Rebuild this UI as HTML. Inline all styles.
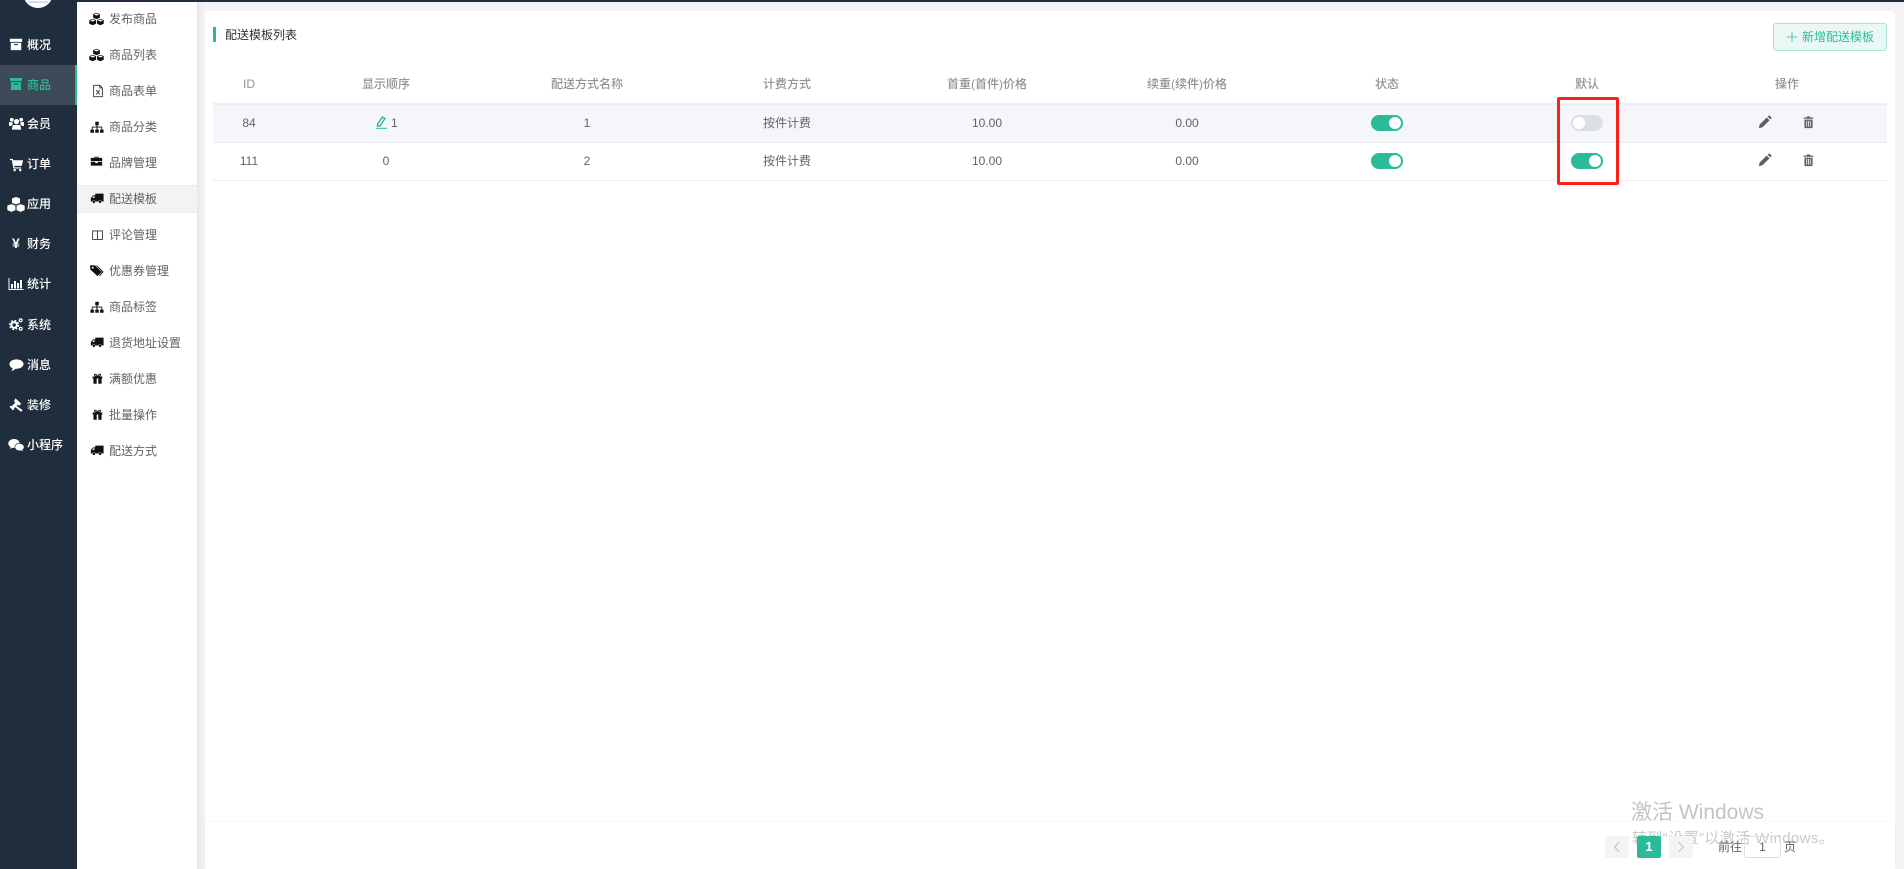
<!DOCTYPE html>
<html lang="zh"><head><meta charset="utf-8"><title>配送模板列表</title>
<style>
*{box-sizing:border-box}
html,body{margin:0;padding:0}
body{width:1904px;height:869px;position:relative;overflow:hidden;background:#f3f3f3;font:12px/16px "Liberation Sans","Noto Sans CJK SC",sans-serif;color:#606266}
.a{position:absolute}
.t{position:absolute;white-space:nowrap}
.c{position:absolute;white-space:nowrap;transform:translateX(-50%);text-align:center}
svg{position:absolute;display:block}
.m{position:absolute;left:27px;color:#fff;font-weight:500;white-space:nowrap;line-height:16px}
.s{position:absolute;left:109px;color:#606266;white-space:nowrap;line-height:16px}
.h{color:#909399;font-weight:500}
.sw{position:absolute;width:32px;height:16px;border-radius:8px;background:#2bbb9b}
.sw i{position:absolute;top:2px;left:18px;width:12px;height:12px;border-radius:50%;background:#fff}
.sw.off{background:#dcdfe6}.sw.off i{left:2px}
.pg{position:absolute;top:836px;width:24px;height:22px;border-radius:2px;background:#f4f4f5}
</style></head><body>
<svg width="0" height="0" style="position:absolute">
<defs>
<symbol id="cubes" viewBox="0 0 16 16"><path d="M8 .8l3.600 1.400v3.900L8 7.600 4.400 6.100V2.200zM3.900 7.200l3.600 1.400v3.900l-3.600 1.600L.3 12.500V8.600zM12.100 7.200l3.600 1.400v3.900l-3.600 1.600-3.600-1.600V8.600z" fill="currentColor"/><path d="M5.200 2.600L8 3.700l2.800-1.100L8 1.600zM1.100 9L3.900 10.100 6.700 9 3.900 8zM9.300 9l2.800 1.100L14.900 9 12.100 8z" fill="#fff"/></symbol>
<symbol id="file" viewBox="0 0 16 16"><path d="M3 1.500h7l3 3v10H3zM10 1.500v3h3" fill="none" stroke="currentColor" stroke-width="1"/><path d="M6 7l4 5M10 7l-4 5" stroke="currentColor" stroke-width="1.100"/></symbol>
<symbol id="tree" viewBox="0 0 16 16"><path d="M6 2h4v4H8.600v1.500H14V11h1.500v3.500h-4V11H13V8.500H8.600V11H10v3.500H6V11h1.400V8.500H3V11h1.500v3.500h-4V11H2V7.500h5.400V6H6z" fill="currentColor"/></symbol>
<symbol id="brief" viewBox="0 0 16 16"><path d="M5.500 3.500V2.200h5v1.300H15v4H1v-4zM6.500 3.500h3V3h-3zM1 8.500h5.500V10h3V8.500H15V13H1z" fill="currentColor"/></symbol>
<symbol id="truck" viewBox="0 0 16 16"><path d="M6 3h9.500v9h-2.200a1.900 1.900 0 0 0-3.600 0H6.300a1.900 1.900 0 0 0-3.600 0H1V7.800L3.600 5H6z" fill="currentColor"/><path d="M2.400 7.800L4 6h1.200v1.800z" fill="#fff"/><circle cx="4.500" cy="12.500" r="1.400" fill="currentColor"/><circle cx="11.500" cy="12.500" r="1.400" fill="currentColor"/></symbol>
<symbol id="cols" viewBox="0 0 16 16"><path d="M2 3h12v10.500H2zM8 3v10.500" fill="none" stroke="currentColor" stroke-width="1.100"/></symbol>
<symbol id="tags" viewBox="0 0 16 16"><path d="M1 2.500h5.500l7 7L9 14 1.500 7z" fill="currentColor"/><path d="M8.500 2.500l7 7-4 4.500-.8-.7 3.300-3.800-6.500-7z" fill="currentColor"/><circle cx="4" cy="5" r="1" fill="#fff"/></symbol>
<symbol id="gift" viewBox="0 0 16 16"><path d="M2 5.500h12v2.500h-1v6.500H3V8H2zM7 8v6.500h2V8z" fill="currentColor" fill-rule="evenodd"/><path d="M8 5.500C7 2.500 4 2 4.300 3.800 4.700 5.300 7 5.500 8 5.500c1 0 3.300-.2 3.700-1.700C12 2 9 2.500 8 5.500z" fill="none" stroke="currentColor" stroke-width="1.200"/></symbol>
<symbol id="box" viewBox="0 0 16 16"><path d="M1 2h14v3.500H1zM2 6.500h12V15H2z" fill="currentColor"/><rect x="6" y="8" width="4" height="1.300" fill="#1f2d3d"/></symbol>
<symbol id="users" viewBox="0 0 16 16"><circle cx="8" cy="5.500" r="2.800" fill="currentColor"/><circle cx="3" cy="3.500" r="2" fill="currentColor"/><circle cx="13" cy="3.500" r="2" fill="currentColor"/><path d="M4 9h8l1 5H3zM0 6h3.500l.6 2L2.500 10H0zM16 6h-3.500l-.6 2 1.600 2H16z" fill="currentColor"/></symbol>
<symbol id="cart" viewBox="0 0 16 16"><path d="M1 2h3l.4 1.500H15l-1.300 6H5.600l.3 1.500H13v1.300H4.700L3 3.300H1z" fill="currentColor"/><circle cx="6" cy="14" r="1.300" fill="currentColor"/><circle cx="12" cy="14" r="1.300" fill="currentColor"/></symbol>
<symbol id="chart" viewBox="0 0 16 16"><path d="M1 2v11.500h14.500" fill="none" stroke="currentColor" stroke-width="1"/><path d="M3 8h2v4.500H3zM6 5h2v7.500H6zM9 7h2v5.500H9zM12 4h2v8.500h-2z" fill="currentColor"/></symbol>
<symbol id="cogs" viewBox="0 0 16 16"><circle cx="5.500" cy="8.500" r="3" fill="none" stroke="currentColor" stroke-width="2.200"/><circle cx="5.500" cy="8.500" r="4.800" fill="none" stroke="currentColor" stroke-width="1.400" stroke-dasharray="2 1.800"/><circle cx="12.500" cy="3.500" r="1.500" fill="none" stroke="currentColor" stroke-width="1.300"/><circle cx="12.500" cy="12.500" r="1.500" fill="none" stroke="currentColor" stroke-width="1.300"/></symbol>
<symbol id="chat" viewBox="0 0 16 16"><path d="M8 2.500c4 0 7.500 2 7.500 5S12 12.500 8 12.500h-1C5.500 13.800 4 14.800 2.500 15c.8-1 1.200-2 1.300-3C1.800 11 .5 9.400.5 7.500c0-3 3.500-5 7.500-5z" fill="currentColor"/></symbol>
<symbol id="gavel" viewBox="0 0 16 16"><path d="M7 1.500l6 5.500-2.300 2.300-1.300-1.200L8 9.500l6.500 4.500-1.500 1.800L6.700 10.800 5.200 12.200l.6.800-1.600 1.200L.5 10.500l1.600-1.300.7.700L6.800 6 5.300 4.600z" fill="currentColor"/></symbol>
<symbol id="wechat" viewBox="0 0 16 16"><path d="M6 2c3 0 5.300 1.600 5.600 4-2.800 0-5 1.800-5 4 0 .4 0 .7.100 1H6c-.7 0-1.300-.1-1.800-.2L2 12l.6-1.900C1.200 9.200.3 8 .3 6.500.3 4 2.800 2 6 2z" fill="currentColor"/><path d="M11.500 6.800c2.400 0 4.300 1.500 4.300 3.300 0 1-.6 1.900-1.500 2.600l.4 1.500-1.700-.9c-.5.1-1 .2-1.500.2-2.400 0-4.300-1.500-4.300-3.400s1.900-3.300 4.300-3.300z" fill="currentColor"/></symbol>
<symbol id="pencil" viewBox="0 0 16 16"><path d="M1 15l.8-4L10 2.800l3.200 3.200L5 14.200zM11 1.800l1-1c.5-.4 1-.4 1.400 0l1.800 1.800c.4.400.4.900 0 1.400l-1 1z" fill="currentColor"/></symbol>
<symbol id="trash" viewBox="0 0 16 16"><path d="M5.500 2.500L6.500 1h3l1 1.500H14v1.500H2V2.500zM3 5h10v9.500c0 .5-.4 1-1 1H4c-.6 0-1-.5-1-1zM5.300 6.500v7.300h1V6.500zM7.500 6.500v7.300h1V6.500zM9.700 6.500v7.300h1V6.500z" fill="currentColor" fill-rule="evenodd"/></symbol>
</defs></svg>

<!-- main nav -->
<div class="a" style="left:0;top:0;width:1904px;height:2px;background:#1f2d3d"></div>
<div class="a" style="left:0;top:0;width:77px;height:869px;background:#1f2d3d"></div>
<div class="a" style="left:23px;top:-22px;width:30px;height:30px;border-radius:50%;background:#fff;overflow:hidden"><div class="a" style="left:5px;top:23px;width:20px;height:2px;background:#cfdfee"></div></div>
<div class="a" style="left:0;top:65px;width:77px;height:40px;background:#3d4a57"></div>
<div class="a" style="left:75px;top:65px;width:2px;height:40px;background:#2bbb9b"></div>

<svg style="left:9px;top:37px;color:#fff" width="14" height="14"><use href="#box"/></svg><div class="m" style="top:37px">概况</div>
<svg style="left:9px;top:77px;color:#2bbb9b" width="14" height="14"><path d="M1 1h12v3H1zM2 5h10v8H2z" fill="#2bbb9b"/><rect x="5" y="6.500" width="4" height="1.200" fill="#3d4a57"/></svg><div class="m" style="top:77px;color:#2bbb9b">商品</div>
<svg style="left:9px;top:116px;color:#fff" width="15" height="16"><use href="#users"/></svg><div class="m" style="top:116px">会员</div>
<svg style="left:9px;top:157px;color:#fff" width="15" height="15"><use href="#cart"/></svg><div class="m" style="top:156px">订单</div>
<svg style="left:7px;top:196px;color:#fff" width="18" height="18"><use href="#cubes"/></svg><div class="m" style="top:196px">应用</div>
<div class="t" style="left:12px;top:235px;color:#fff;font:bold 14px/16px 'Liberation Sans',sans-serif">¥</div><div class="m" style="top:236px">财务</div>
<svg style="left:8px;top:276px;color:#fff" width="16" height="16"><use href="#chart"/></svg><div class="m" style="top:276px">统计</div>
<svg style="left:9px;top:317px;color:#fff" width="15" height="15"><use href="#cogs"/></svg><div class="m" style="top:317px">系统</div>
<svg style="left:9px;top:357px;color:#fff" width="15" height="15"><use href="#chat"/></svg><div class="m" style="top:357px">消息</div>
<svg style="left:9px;top:397px;color:#fff" width="15" height="15"><use href="#gavel"/></svg><div class="m" style="top:397px">装修</div>
<svg style="left:8px;top:437px;color:#fff" width="16" height="16"><use href="#wechat"/></svg><div class="m" style="top:437px">小程序</div>

<!-- sub nav -->
<div class="a" style="left:77px;top:2px;width:120px;height:867px;background:#fff"></div>
<div class="a" style="left:197px;top:2px;width:8px;height:867px;background:linear-gradient(to right,#e8e8e8,#f3f3f3)"></div>
<div class="a" style="left:77px;top:185px;width:120px;height:28px;background:#f3f3f3;border-top:1px solid #ededf0;border-bottom:1px solid #ededf0"></div>

<svg style="left:89px;top:12px;color:#111" width="15" height="15"><use href="#cubes"/></svg><div class="s" style="top:11px">发布商品</div>
<svg style="left:89px;top:48px;color:#111" width="15" height="15"><use href="#cubes"/></svg><div class="s" style="top:47px">商品列表</div>
<svg style="left:91px;top:84px;color:#333" width="14" height="14"><use href="#file"/></svg><div class="s" style="top:83px">商品表单</div>
<svg style="left:90px;top:120px;color:#111" width="14" height="14"><use href="#tree"/></svg><div class="s" style="top:119px">商品分类</div>
<svg style="left:90px;top:155px;color:#111" width="13" height="13"><use href="#brief"/></svg><div class="s" style="top:155px">品牌管理</div>
<svg style="left:90px;top:191px;color:#111" width="14" height="14"><use href="#truck"/></svg><div class="s" style="top:191px">配送模板</div>
<svg style="left:91px;top:228px;color:#333" width="13" height="14"><use href="#cols"/></svg><div class="s" style="top:227px">评论管理</div>
<svg style="left:89px;top:263px;color:#111" width="15" height="15"><use href="#tags"/></svg><div class="s" style="top:263px">优惠券管理</div>
<svg style="left:90px;top:300px;color:#111" width="14" height="14"><use href="#tree"/></svg><div class="s" style="top:299px">商品标签</div>
<svg style="left:90px;top:335px;color:#111" width="14" height="14"><use href="#truck"/></svg><div class="s" style="top:335px">退货地址设置</div>
<svg style="left:91px;top:372px;color:#111" width="13" height="13"><use href="#gift"/></svg><div class="s" style="top:371px">满额优惠</div>
<svg style="left:91px;top:408px;color:#111" width="13" height="13"><use href="#gift"/></svg><div class="s" style="top:407px">批量操作</div>
<svg style="left:90px;top:443px;color:#111" width="14" height="14"><use href="#truck"/></svg><div class="s" style="top:443px">配送方式</div>

<!-- card -->
<div class="a" style="left:205px;top:11px;width:1690px;height:858px;background:#fff;border-radius:4px 4px 0 0"></div>
<div class="a" style="left:213px;top:27px;width:3px;height:15px;background:#2bbb9b"></div>
<div class="t" style="left:225px;top:27px;color:#303133">配送模板列表</div>

<div class="a" style="left:1773px;top:23px;width:114px;height:28px;background:#e9f8f5;border:1px solid #aae4d7;border-radius:3px"></div>
<svg style="left:1787px;top:32px" width="10" height="10"><path d="M5 0v10M0 5h10" stroke="#2bbb9b" stroke-width=".8"/></svg>
<div class="t" style="left:1802px;top:29px;color:#2bbb9b">新增配送模板</div>

<!-- table -->
<div class="a" style="left:213px;top:103px;width:1674px;height:2px;background:#ebeef5"></div>
<div class="a" style="left:213px;top:105px;width:1674px;height:37px;background:#f5f6fa"></div>
<div class="a" style="left:213px;top:142px;width:1674px;height:1px;background:#ebeef5"></div>
<div class="a" style="left:213px;top:180px;width:1674px;height:1px;background:#ebeef5"></div>

<div class="c h" style="left:249px;top:76px">ID</div>
<div class="c h" style="left:386px;top:76px">显示顺序</div>
<div class="c h" style="left:587px;top:76px">配送方式名称</div>
<div class="c h" style="left:787px;top:76px">计费方式</div>
<div class="c h" style="left:987px;top:76px">首重(首件)价格</div>
<div class="c h" style="left:1187px;top:76px">续重(续件)价格</div>
<div class="c h" style="left:1387px;top:76px">状态</div>
<div class="c h" style="left:1587px;top:76px">默认</div>
<div class="c h" style="left:1787px;top:76px">操作</div>

<div class="c" style="left:249px;top:115px">84</div>
<svg style="left:375px;top:116px" width="13" height="13" viewBox="0 0 13 13"><path d="M7.500 1l2.500 1.500L5 10H2.500L2.500 8z" fill="none" stroke="#2bbb9b" stroke-width="1.400"/><path d="M1 12.300h11" stroke="#2bbb9b" stroke-width="1"/></svg>
<div class="t" style="left:391px;top:115px">1</div>
<div class="c" style="left:587px;top:115px">1</div>
<div class="c" style="left:787px;top:115px">按件计费</div>
<div class="c" style="left:987px;top:115px">10.00</div>
<div class="c" style="left:1187px;top:115px">0.00</div>
<div class="sw" style="left:1371px;top:115px"><i></i></div>
<div class="sw off" style="left:1571px;top:115px"><i></i></div>
<svg style="left:1758px;top:115px;color:#5f5f5f" width="14" height="14"><use href="#pencil"/></svg>
<svg style="left:1802px;top:115px;color:#5f5f5f" width="13" height="14"><use href="#trash"/></svg>

<div class="c" style="left:249px;top:153px">111</div>
<div class="c" style="left:386px;top:153px">0</div>
<div class="c" style="left:587px;top:153px">2</div>
<div class="c" style="left:787px;top:153px">按件计费</div>
<div class="c" style="left:987px;top:153px">10.00</div>
<div class="c" style="left:1187px;top:153px">0.00</div>
<div class="sw" style="left:1371px;top:153px"><i></i></div>
<div class="sw" style="left:1571px;top:153px"><i></i></div>
<svg style="left:1758px;top:153px;color:#5f5f5f" width="14" height="14"><use href="#pencil"/></svg>
<svg style="left:1802px;top:153px;color:#5f5f5f" width="13" height="14"><use href="#trash"/></svg>

<div class="a" style="left:1557px;top:97px;width:62px;height:88px;border:3px solid #fe2016;border-radius:2px"></div>

<!-- footer -->
<div class="a" style="left:205px;top:822px;width:1690px;height:47px;background:#fff;box-shadow:0 -1px 2px rgba(0,0,0,.03)"></div>
<div class="t" style="left:1631px;top:799px;color:#c4c4c4;font-size:21px;line-height:28px">激活 Windows</div>
<div class="t" style="left:1632px;top:830px;color:#c9c9c9;font-size:15px;line-height:18px;letter-spacing:.4px">转到“设置”以激活 Windows。</div>
<div class="pg" style="left:1605px"></div>
<svg style="left:1613px;top:841px" width="8" height="12"><path d="M6.500 1L1.500 6l5 5" fill="none" stroke="#c0c4cc" stroke-width="1.200"/></svg>
<div class="pg" style="left:1637px;background:#2bbb9b;color:#fff;font-weight:bold;text-align:center;line-height:22px;font-size:13px">1</div>
<div class="pg" style="left:1669px"></div>
<svg style="left:1677px;top:841px" width="8" height="12"><path d="M1.500 1l5 5-5 5" fill="none" stroke="#c0c4cc" stroke-width="1.200"/></svg>
<div class="t" style="left:1718px;top:839px">前往</div>
<div class="a" style="left:1744px;top:836px;width:37px;height:22px;border:1px solid #dcdfe6;border-radius:3px;text-align:center;line-height:20px">1</div>
<div class="t" style="left:1784px;top:839px">页</div>
</body></html>
